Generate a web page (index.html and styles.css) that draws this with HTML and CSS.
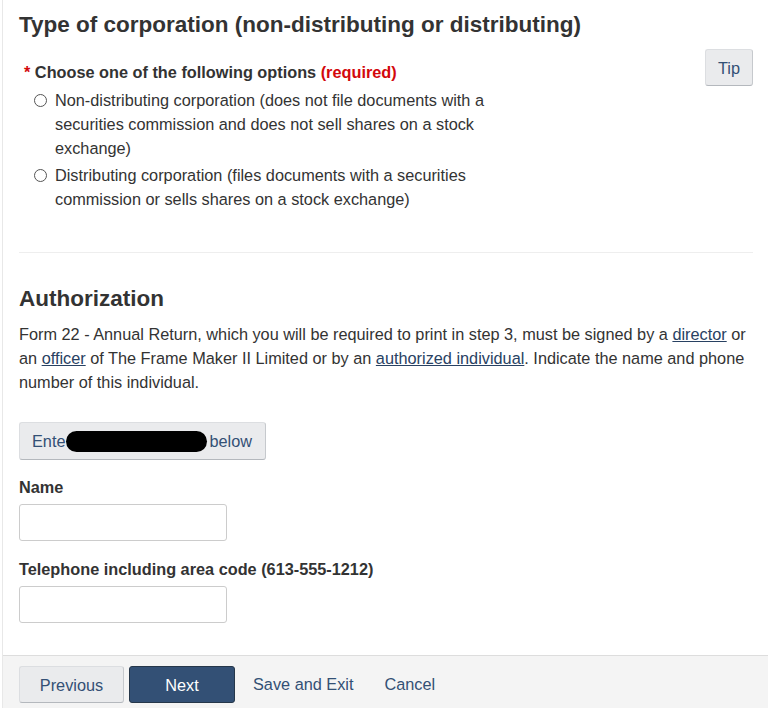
FILE: index.html
```html
<!DOCTYPE html>
<html lang="en">
<head>
<meta charset="utf-8">
<title>Type of corporation</title>
<link rel="stylesheet" href="styles.css">
</head>
<body>
<div class="page">
  <main class="content">
    <h2 class="heading heading-top">Type of corporation (non-distributing or distributing)</h2>
    <div class="question">
      <div class="choices" role="radiogroup">
        <div class="required"><span class="star">*</span> Choose one of the following options <span class="req">(required)</span></div>
        <label class="option"><span class="radio"></span><span class="opt-text">Non-distributing corporation (does not file documents with a securities commission and does not sell shares on a stock exchange)</span></label>
        <label class="option"><span class="radio"></span><span class="opt-text">Distributing corporation (files documents with a securities commission or sells shares on a stock exchange)</span></label>
      </div>
      <button class="btn btn-default tip" type="button">Tip</button>
    </div>
    <hr class="divider">
    <h2 class="heading">Authorization</h2>
    <p class="intro">Form 22 - Annual Return, which you will be required to print in step 3, must be signed by a <a href="#">director</a> or an <a href="#">officer</a> of The Frame Maker II Limited or by an <a href="#">authorized individual</a>. Indicate the name and phone number of this individual.</p>
    <button class="btn btn-default enter" type="button">Ente<span class="redact"></span>below</button>
    <div class="field">
      <label class="field-label" for="name">Name</label>
      <input class="text-input" id="name" type="text">
    </div>
    <div class="field">
      <label class="field-label" for="tel">Telephone including area code (613-555-1212)</label>
      <input class="text-input" id="tel" type="text">
    </div>
  </main>
  <footer class="actions">
    <button class="btn btn-default prev" type="button">Previous</button>
    <button class="btn btn-primary next" type="button">Next</button>
    <a class="action-link" href="#">Save and Exit</a>
    <a class="action-link cancel" href="#">Cancel</a>
  </footer>
</div>
</body>
</html>
```
FILE: styles.css
```css
html, body {
  margin: 0;
  padding: 0;
  background: #fff;
}
body {
  font-family: "Liberation Sans", Arial, sans-serif;
  font-size: 16.3px;
  line-height: 24px;
  color: #333;
}
.page {
  margin-left: 2px;
  border-left: 1px solid #e8e8e8;
  height: 708px;
  display: flex;
  flex-direction: column;
  overflow: hidden;
}
.content {
  padding: 0 15px 0 16px;
  flex: 1;
}
.heading {
  margin: 0;
  font-size: 22.5px;
  line-height: 28px;
  font-weight: bold;
  color: #333;
}
.heading-top {
  padding-top: 11px;
}
.question {
  display: flex;
  justify-content: space-between;
  align-items: flex-start;
  margin-top: 10px;
}
.choices {
  min-width: 0;
  padding-top: 11px;
}
.required {
  font-weight: bold;
  margin-left: 5px;
  margin-bottom: 4px;
}
.star, .req {
  color: #d3080c;
}
.option {
  display: flex;
  align-items: flex-start;
  margin-left: 15px;
  width: 470px;
  margin-bottom: 3px;
}
.radio {
  flex: none;
  width: 11px;
  height: 11px;
  border: 1px solid #555;
  border-radius: 50%;
  margin-top: 6px;
  margin-right: 8px;
}
.btn {
  font-family: inherit;
  font-size: 16.3px;
  line-height: 20px;
  border-radius: 3px;
  cursor: pointer;
}
.btn-default {
  background: #eaebed;
  color: #335075;
  border: 1px solid #dcdee1;
  border-bottom-color: #b4b8bd;
  border-right-color: #c6c9cd;
}
.btn-primary {
  background: #335075;
  color: #fff;
  border: 1px solid #26374a;
}
.tip {
  height: 37px;
  width: 48px;
  padding: 0;
}
.divider {
  border: 0;
  border-top: 1px solid #eee;
  margin: 38px 0 32px;
}
.intro {
  margin: 9px 0 28px;
}
.intro a {
  color: #284162;
  text-decoration: underline;
}
.enter {
  display: flex;
  align-items: center;
  height: 38px;
  padding: 0 12px;
  width: 247px;
}
.redact {
  display: inline-block;
  width: 141px;
  height: 21px;
  background: #000;
  border-radius: 11px;
  margin: 0 3px 0 0;
}
.field {
  margin-top: 15px;
}
.field-label {
  display: block;
  font-weight: bold;
  margin-bottom: 5px;
}
.text-input {
  display: block;
  box-sizing: border-box;
  width: 208px;
  height: 37px;
  border: 1px solid #ccc;
  border-radius: 3px;
  margin: 0;
  font: inherit;
}
.field + .field {
  margin-top: 16px;
}
.actions {
  flex: none;
  height: 53px;
  box-sizing: border-box;
  border-top: 1px solid #ddd;
  background: #f4f4f4;
  padding: 10px 16px 0;
  display: flex;
  align-items: flex-start;
  gap: 5px;
}
.actions .btn {
  height: 37px;
  width: 106px;
  padding: 0;
}
.actions .prev {
  width: 105px;
}
.action-link {
  color: #335075;
  text-decoration: none;
  margin-left: 13px;
  line-height: 37px;
}
.cancel {
  margin-left: 26px;
}
```
